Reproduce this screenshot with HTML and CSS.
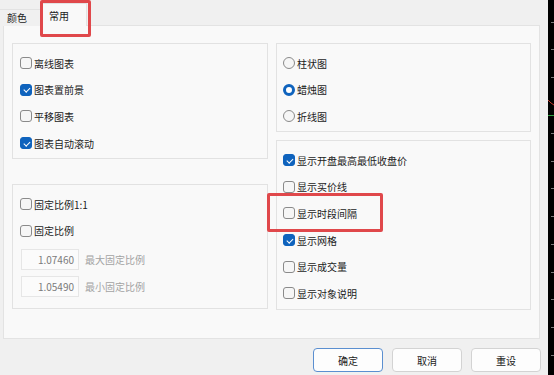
FILE: index.html
```html
<!DOCTYPE html>
<html lang="zh-CN">
<head>
  <meta charset="UTF-8" />
  <title>图表属性</title>
  <link rel="stylesheet" href="styles.css">
</head>
<body>

<div class="screen">
  <div class="dialog">
    <div class="tabs">
      <div class="tab">颜色</div>
      <div class="tab active">常用</div>
    </div>

    <div class="panel">
      <div class="col col-left">
        <div class="group g-view">
          <div class="row"><span class="box"></span>离线图表</div>
          <div class="row"><span class="box on"></span>图表置前景</div>
          <div class="row"><span class="box"></span>平移图表</div>
          <div class="row"><span class="box on"></span>图表自动滚动</div>
        </div>
        <div class="group g-scale">
          <div class="row"><span class="box"></span>固定比例1:1</div>
          <div class="row"><span class="box"></span>固定比例</div>
          <div class="field"><span class="num">1.07460</span><span class="hint">最大固定比例</span></div>
          <div class="field"><span class="num">1.05490</span><span class="hint">最小固定比例</span></div>
        </div>
      </div>

      <div class="col col-right">
        <div class="group g-type">
          <div class="row"><span class="radio"></span>柱状图</div>
          <div class="row"><span class="radio on"></span>蜡烛图</div>
          <div class="row"><span class="radio"></span>折线图</div>
        </div>
        <div class="group g-show">
          <div class="row"><span class="box on"></span>显示开盘最高最低收盘价</div>
          <div class="row"><span class="box"></span>显示买价线</div>
          <div class="row"><span class="box"></span>显示时段间隔</div>
          <div class="row"><span class="box on"></span>显示网格</div>
          <div class="row"><span class="box"></span>显示成交量</div>
          <div class="row"><span class="box"></span>显示对象说明</div>
        </div>
      </div>
    </div>

    <div class="actions">
      <button class="btn default">确定</button>
      <button class="btn">取消</button>
      <button class="btn">重设</button>
    </div>

    <!-- annotation boxes -->
    <div class="mark mark-tab"></div>
    <div class="mark mark-row"></div>
  </div>

  <div class="chart-edge">
    <svg width="6" height="375" viewBox="0 0 6 375">
      <g stroke="#7a7a7a" stroke-width="1">
        <line x1="3" y1="22.5" x2="6" y2="22.5" />
        <line x1="3" y1="49.5" x2="6" y2="49.5" />
        <line x1="3" y1="77.5" x2="6" y2="77.5" />
        <line x1="3" y1="133.5" x2="6" y2="133.5" />
        <line x1="3" y1="161.5" x2="6" y2="161.5" />
        <line x1="3" y1="188.5" x2="6" y2="188.5" />
        <line x1="3" y1="216.5" x2="6" y2="216.5" />
        <line x1="3" y1="244.5" x2="6" y2="244.5" />
        <line x1="3" y1="272.5" x2="6" y2="272.5" />
        <line x1="3" y1="299.5" x2="6" y2="299.5" />
        <line x1="3" y1="327.5" x2="6" y2="327.5" />
        <line x1="3" y1="355.5" x2="6" y2="355.5" />
      </g>
      <polyline points="0,100 3,103 6,105" fill="none" stroke="#c0392b" stroke-width="1" />
      <line x1="0" y1="115.5" x2="6" y2="115.5" stroke="#2e9e3e" stroke-width="1" />
    </svg>
  </div>
</div>

</body>
</html>
```

FILE: styles.css
```css
body { margin: 0; background: #f0f0f0; font-family: "Noto Sans CJK SC", "Noto Sans", sans-serif; font-size: 10px; color: #1b1b1b; }
.screen { display: flex; width: 554px; height: 375px; overflow: hidden; }
.dialog { position: relative; width: 548px; display: flex; flex-direction: column; }
.chart-edge { width: 6px; background: #000; }
.chart-edge svg { display: block; }

/* tabs */
.tabs { display: flex; align-items: flex-end; height: 26px; margin-bottom: -1px; position: relative; z-index: 1; }
.tab { box-sizing: border-box; height: 17px; width: 43px; padding-left: 7px; line-height: 16px; border: 1px solid #e3e3e3; border-bottom: none; border-left: none; background: #f0f0f0; }
.tab.active { height: 23px; width: 44px; padding-left: 6px; padding-top: 4px; background: #f9f9f9; border-color: #e3e3e3; }

/* panel */
.panel { box-sizing: border-box; margin-left: 3px; width: 537px; height: 314px; border: 1px solid #e3e3e3; background: #f9f9f9; padding: 17px 8px 0 8px; display: flex; gap: 8px; }
.col { display: flex; flex-direction: column; }
.col-left { width: 256px; gap: 25px; }
.col-right { width: 255px; gap: 8px; }
.group { box-sizing: border-box; border: 1px solid #e2e2e2; background: #f9f9f9; padding: 6px 0 0 7px; }
.col-right .group { padding-left: 6px; }
.g-view { height: 116px; }
.g-scale { height: 125px; }
.g-type { height: 89px; }
.g-show { height: 170px; }

.row { display: flex; align-items: center; height: 26.6px; white-space: nowrap; }
.box { box-sizing: border-box; width: 12px; height: 12px; border: 1px solid #8a8a8a; border-radius: 3px; background: #f6f6f6; margin-right: 2px; position: relative; flex: none; }
.box.on { background: #0f63bd; border-color: #0f63bd; }
.box.on::after { content: ""; position: absolute; left: 3.5px; top: 1.5px; width: 2.5px; height: 5px; border: solid #fff; border-width: 0 1.2px 1.2px 0; transform: rotate(45deg); }
.radio { box-sizing: border-box; width: 12px; height: 12px; border: 1px solid #8a8a8a; border-radius: 50%; background: #f6f6f6; margin-right: 2px; flex: none; }
.radio.on { border: 3.5px solid #0f63bd; background: #fff; }

.field { display: flex; align-items: center; height: 21px; margin-top: 5px; }
.field + .field { margin-top: 6px; }
.num { box-sizing: border-box; width: 58px; height: 21px; margin-left: 1px; border: 1px solid #e6e6e6; background: #fbfbfb; text-align: right; padding-right: 4px; line-height: 19px; color: #7a7a7a; }
.hint { margin-left: 6px; color: #a3a3a3; }

/* buttons */
.actions { display: flex; justify-content: flex-end; gap: 9px; padding-right: 7px; margin-top: 9px; }
.btn { box-sizing: border-box; width: 70px; height: 24px; border: 1px solid #d3d3d3; border-radius: 4px; background: #fdfdfd; font-family: inherit; font-size: 10px; color: #1b1b1b; padding: 0; }
.btn.default { border-color: #5b8fd0; }

/* red annotation frames */
.mark { position: absolute; box-sizing: border-box; border: 3px solid #e0484b; border-radius: 2px; z-index: 2; }
.mark-tab { left: 40px; top: 0; width: 51px; height: 37px; }
.mark-row { left: 267px; top: 193px; width: 116px; height: 39px; }
```
